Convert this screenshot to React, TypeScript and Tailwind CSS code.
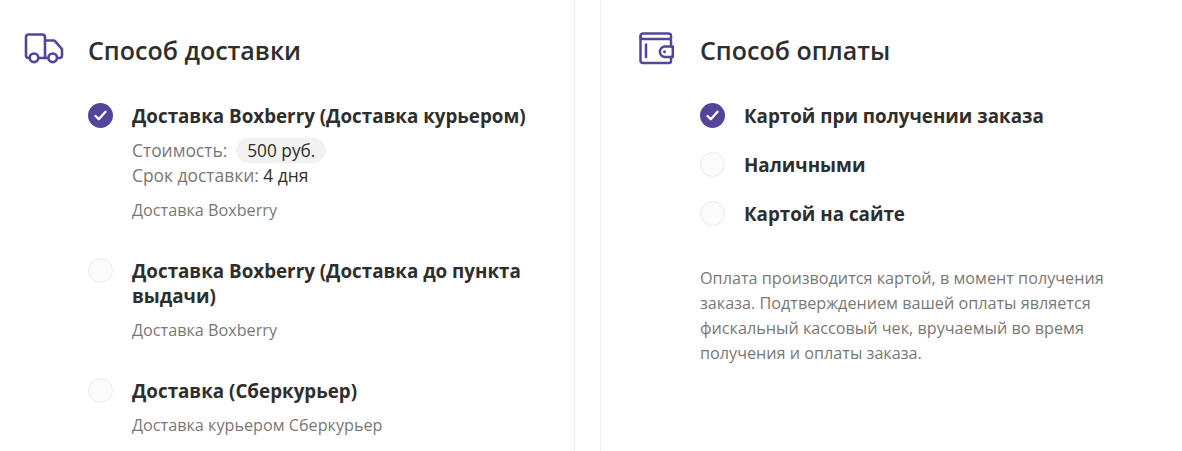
const Truck = () => (
  <svg width="40" height="34" viewBox="0 0 40 34" fill="none" stroke="#54459b" strokeWidth="2.600" strokeLinecap="round" strokeLinejoin="round" className="shrink-0">
    <path d="M5.300 27H4.500A2.500 2.500 0 0 1 2 24.500V6a2.500 2.500 0 0 1 2.500-2.500h14A2.500 2.500 0 0 1 21 6v21" />
    <path d="M14.500 27h9" />
    <path d="M21 9.500h8.500a2 2 0 0 1 1.500.7l6.500 7.300a1.500 1.500 0 0 1 .5 1v6a2.500 2.500 0 0 1-2.500 2.500h-2.500" />
    <circle cx="10" cy="26.800" r="4.300" />
    <circle cx="28.700" cy="26.800" r="4.300" />
  </svg>
);

const Wallet = () => (
  <svg width="36" height="34" viewBox="0 0 36 34" fill="none" stroke="#54459b" strokeWidth="2.500" strokeLinecap="round" strokeLinejoin="round" className="shrink-0">
    <path d="M32 15.500V10a2 2 0 0 0-2-2H4a2.500 2.500 0 0 1-2.500-2.500V5A2.500 2.500 0 0 1 4 2.500h25.500A2.500 2.500 0 0 1 32 5v3" />
    <path d="M1.500 5.500V29.500A2.500 2.500 0 0 0 4 32h26a2 2 0 0 0 2-2v-4" />
    <path d="M7 13.500v12.500" />
    <path d="M33.800 15.500H25.500a5.300 5.300 0 0 0 0 10.500h8.300z" />
    <circle cx="25.500" cy="20.700" r="1.500" fill="#54459b" stroke="none" />
  </svg>
);

const Radio = ({ on }: { on?: boolean }) =>
  on ? (
    <span className="flex h-[25px] w-[25px] shrink-0 items-center justify-center rounded-full bg-[#54459b]">
      <svg width="13" height="11" viewBox="0 0 13 11" fill="none" stroke="#fff" strokeWidth="2.300" strokeLinecap="round" strokeLinejoin="round">
        <path d="M1.500 6l3.300 3.200L11.500 1.800" />
      </svg>
    </span>
  ) : (
    <span className="h-[25px] w-[25px] shrink-0 rounded-full border border-[#ececec] bg-[#fbfbfb]" />
  );

const Option = ({ on, title, className, children }: { on?: boolean; title: string; className?: string; children?: React.ReactNode }) => (
  <div className={`flex gap-[19px] ${className ?? ""}`}>
    <Radio on={on} />
    <div className="mt-px min-w-0 flex-1">
      <div className="text-[18.800px] font-bold leading-[25px] text-[#2e2e2e]">{title}</div>
      {children}
    </div>
  </div>
);

export default function App() {
  return (
    <div className="flex h-[451px] w-[1182px] overflow-hidden bg-white font-['Open_Sans','Noto_Sans',sans-serif]">
      <section className="w-[575px] shrink-0 border-r border-[#f0f0f0] pl-[24px] pr-[40px] pt-[31px]">
        <div className="flex h-[40px] items-start gap-[24px]">
          <Truck />
          <h2 className="text-[25px] font-semibold leading-[39px] text-[#2e2e2e]">Способ доставки</h2>
        </div>
        <div className="pl-[64px] pt-[32px]">
          <Option on title="Доставка Boxberry (Доставка курьером)">
            <div className="mt-[9px] flex h-[25px] items-center text-[17.400px] text-[#787878]">
              Стоимость:
              <span className="ml-[9px] rounded-full bg-[#f2f2f2] px-[11px] text-[17.300px] leading-[25px] text-[#2e2e2e]">500 руб.</span>
            </div>
            <div className="text-[17.400px] leading-[25px] text-[#787878]">
              Срок доставки: <span className="text-[#2e2e2e]">4 дня</span>
            </div>
            <div className="mt-[10px] text-[16.200px] leading-[25px] text-[#787878]">Доставка Boxberry</div>
          </Option>
          <Option title="Доставка Boxberry (Доставка до пункта выдачи)" className="mt-[35px]">
            <div className="mt-[9px] text-[16.200px] leading-[25px] text-[#787878]">Доставка Boxberry</div>
          </Option>
          <Option title="Доставка (Сберкурьер)" className="mt-[35px]">
            <div className="mt-[9px] text-[16.200px] leading-[25px] text-[#787878]">Доставка курьером Сберкурьер</div>
          </Option>
        </div>
      </section>
      <section className="ml-[25px] flex-1 border-l border-[#f0f0f0] pl-[38px] pt-[31px]">
        <div className="flex h-[40px] items-start gap-[25px]">
          <Wallet />
          <h2 className="text-[25px] font-semibold leading-[39px] text-[#2e2e2e]">Способ оплаты</h2>
        </div>
        <div className="pl-[61px] pt-[32px]">
          <Option on title="Картой при получении заказа" />
          <Option title="Наличными" className="mt-[23px]" />
          <Option title="Картой на сайте" className="mt-[23px]" />
          <p className="mt-[39px] w-[420px] text-[16.200px] leading-[25px] text-[#787878]">
            Оплата производится картой, в момент получения заказа. Подтверждением вашей оплаты является фискальный кассовый чек, вручаемый во время получения и оплаты заказа.
          </p>
        </div>
      </section>
    </div>
  );
}
